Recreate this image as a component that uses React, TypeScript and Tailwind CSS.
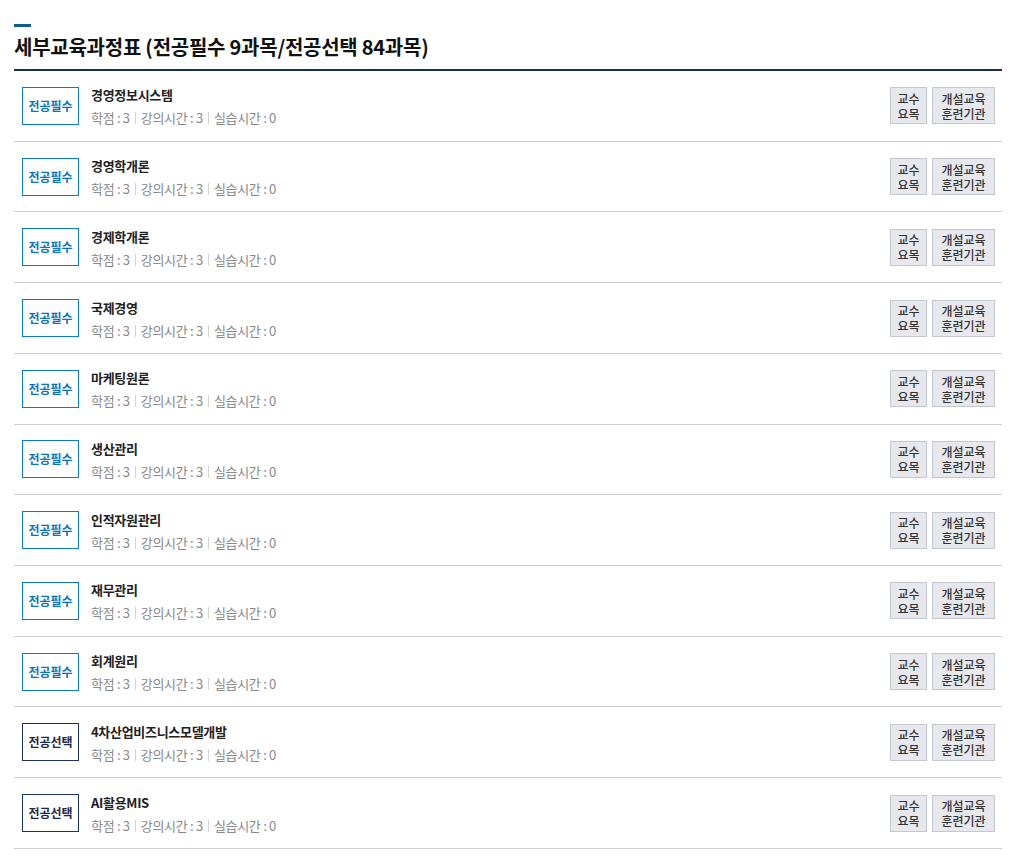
const courses = [
  { type: '전공필수', name: '경영정보시스템' },
  { type: '전공필수', name: '경영학개론' },
  { type: '전공필수', name: '경제학개론' },
  { type: '전공필수', name: '국제경영' },
  { type: '전공필수', name: '마케팅원론' },
  { type: '전공필수', name: '생산관리' },
  { type: '전공필수', name: '인적자원관리' },
  { type: '전공필수', name: '재무관리' },
  { type: '전공필수', name: '회계원리' },
  { type: '전공선택', name: '4차산업비즈니스모델개발' },
  { type: '전공선택', name: 'AI활용MIS' },
]

const font = { fontFamily: '"Noto Sans CJK KR", "Noto Sans", sans-serif' }

function Meta() {
  return (
    <div className="flex items-center text-[13px] leading-5 text-[#888] tracking-[-0.3px]">
      <span>학점 : 3</span>
      <span className="mx-[5px] h-3 w-px bg-[#d4d4d4]" />
      <span>강의시간 : 3</span>
      <span className="mx-[5px] h-3 w-px bg-[#d4d4d4]" />
      <span>실습시간 : 0</span>
    </div>
  )
}

export default function App() {
  return (
    <div className="bg-white min-h-[855px] px-[14px] pt-6 text-[#222]" style={font}>
      <div className="h-[3px] w-[17px] bg-[#0f5d8f]" />
      <h2 className="mt-[6px] pb-2 border-b-2 border-[#13305b] text-[20px] leading-7 font-bold text-[#111] tracking-[-0.25px]">
        세부교육과정표 (전공필수 9과목/전공선택 84과목)
      </h2>
      <ul>
        {courses.map((c) => {
          const req = c.type === '전공필수'
          return (
            <li
              key={c.name}
              className="flex items-center h-[70.73px] border-b border-[#d0d0d0] pl-2 pr-[7px]"
            >
              <div
                className={
                  req
                    ? 'flex items-center justify-center w-[57px] h-[38px] border border-[#0e7cc0] text-[#0c74b6] text-[12px] font-bold'
                    : 'flex items-center justify-center w-[57px] h-[38px] border border-[#1a3560] text-[#1c2a47] text-[12px] font-bold'
                }
              >
                {c.type}
              </div>
              <div className="ml-3 flex-1 mt-[2px]">
                <div className="text-[13px] leading-5 font-bold text-[#222] tracking-[-0.3px]">
                  {c.name}
                </div>
                <div className="mt-[3px]">
                  <Meta />
                </div>
              </div>
              <div className="flex gap-[5px]">
                <button className="w-[37px] h-[37px] bg-[#e6e8ee] border border-[#c3c7cf] text-[12px] leading-[15px] text-[#333] font-medium">
                  교수
                  <br />
                  요목
                </button>
                <button className="w-[63px] h-[37px] bg-[#e6e8ee] border border-[#c3c7cf] text-[12px] leading-[15px] text-[#333] font-medium">
                  개설교육
                  <br />
                  훈련기관
                </button>
              </div>
            </li>
          )
        })}
      </ul>
    </div>
  )
}
